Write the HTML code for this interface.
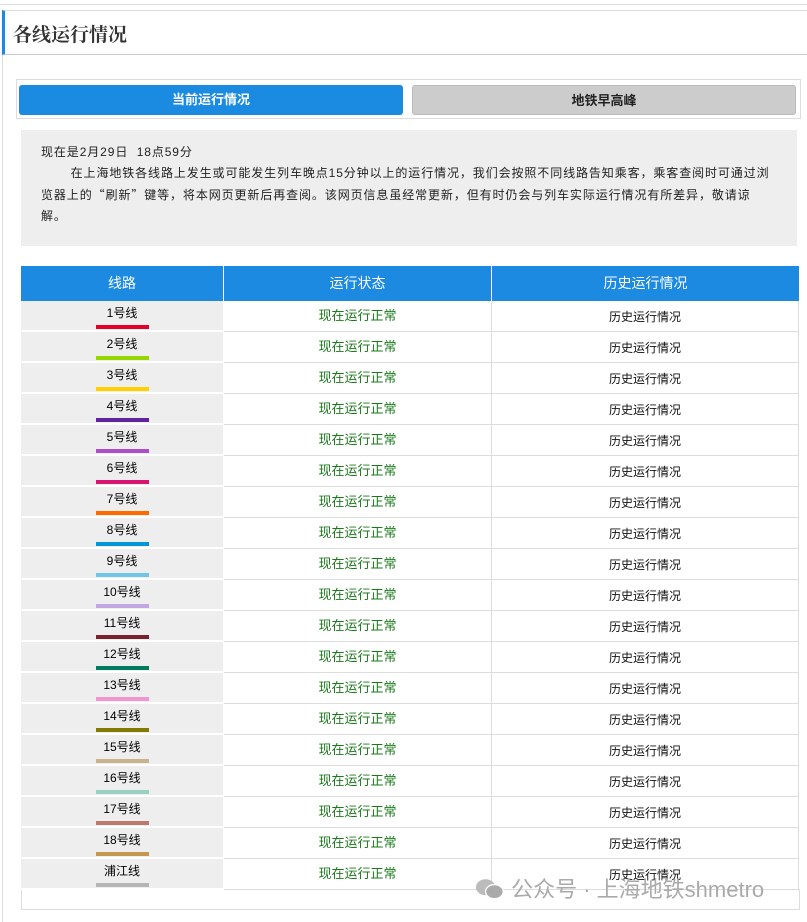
<!DOCTYPE html>
<html><head><meta charset="utf-8"><style>
body{margin:0;width:807px;height:922px;background:#fff;font-family:"Liberation Sans","Noto Sans CJK SC",sans-serif;position:relative;overflow:hidden}
.a{position:absolute}
.topline{left:0;top:4px;width:807px;height:1px;background:#ddd}
.hdr{left:2px;top:10px;width:805px;height:45px;border-top:1px solid #ddd;border-bottom:1px solid #ccc;border-left:3px solid #1a8be0;box-sizing:border-box}
.hdr span{position:absolute;left:8px;top:9px;font-size:19px;color:#333;font-family:"Noto Serif CJK SC",serif;font-weight:bold}
.vline{left:2px;top:55px;width:1px;height:867px;background:#ddd}
.tabs{left:16px;top:79px;width:785px;height:40px;border:1px solid #ddd;box-sizing:border-box}
.btn{top:85px;height:30px;border-radius:3px;font-size:13px;font-weight:bold;text-align:center;line-height:30px}
.info{left:21px;top:130px;width:776px;height:116px;background:#eee;font-size:12px;color:#222;line-height:21px;letter-spacing:0.9px;white-space:nowrap}
.q{font-family:"Noto Sans CJK SC",sans-serif}
.tbl{left:21px;top:266px;width:778px}
.th{display:flex;height:35px;background:#1b8ae0;color:#fff;font-size:14px;line-height:35px;text-align:center}
.row{display:flex;height:31px;font-size:12px;text-align:center}
.c1{width:203px;flex:none;box-sizing:border-box}
.c2{width:268px;flex:none;box-sizing:border-box}
.c3{flex:1;box-sizing:border-box}
.th .c1,.th .c2{border-right:1px solid #fff}
.row .c1{background:#eee;border-bottom:2px solid #fff;border-right:1px solid #fff;line-height:14px;padding-top:5px}
.row .c1 i{display:block;width:53px;height:4px;margin:5px auto 0}
.row .c2{border-bottom:1px solid #ddd;border-right:1px solid #ddd;color:#1a7a1a;font-size:13px;line-height:30px}
.row .c3{border-bottom:1px solid #ddd;border-right:1px solid #ddd;color:#111;line-height:32px}
</style></head><body>
<div class="a topline"></div>
<div class="a hdr"><span>各线运行情况</span></div>
<div class="a vline"></div>
<div class="a tabs"></div>
<div class="a btn" style="left:19px;width:384px;background:#1a8be0;color:#fff">当前运行情况</div>
<div class="a btn" style="left:412px;width:384px;background:#ccc;color:#222;border:1px solid #bbb;box-sizing:border-box">地铁早高峰</div>
<div class="a info"><div style="padding:12px 18px 0 20px">现在是2月29日&nbsp; 18点59分<br>&nbsp;&nbsp;&nbsp;&nbsp;&nbsp;&nbsp;&nbsp;在上海地铁各线路上发生或可能发生列车晚点15分钟以上的运行情况，我们会按照不同线路告知乘客，乘客查阅时可通过浏<br>览器上的<span class="q">“</span>刷新<span class="q">”</span>键等，将本网页更新后再查阅。该网页信息虽经常更新，但有时仍会与列车实际运行情况有所差异，敬请谅<br>解。</div></div>
<div class="a" style="left:21px;top:889px;width:777px;height:20px;border:1px solid #ddd;border-top:none"></div>
<div class="a tbl">
<div class="th"><div class="c1">线路</div><div class="c2">运行状态</div><div class="c3">历史运行情况</div></div>
<div class="row"><div class="c1">1号线<i style="background:#e4002b"></i></div><div class="c2">现在运行正常</div><div class="c3">历史运行情况</div></div>
<div class="row"><div class="c1">2号线<i style="background:#97d700"></i></div><div class="c2">现在运行正常</div><div class="c3">历史运行情况</div></div>
<div class="row"><div class="c1">3号线<i style="background:#ffd100"></i></div><div class="c2">现在运行正常</div><div class="c3">历史运行情况</div></div>
<div class="row"><div class="c1">4号线<i style="background:#5f259f"></i></div><div class="c2">现在运行正常</div><div class="c3">历史运行情况</div></div>
<div class="row"><div class="c1">5号线<i style="background:#ac4fc6"></i></div><div class="c2">现在运行正常</div><div class="c3">历史运行情况</div></div>
<div class="row"><div class="c1">6号线<i style="background:#d71671"></i></div><div class="c2">现在运行正常</div><div class="c3">历史运行情况</div></div>
<div class="row"><div class="c1">7号线<i style="background:#ff6900"></i></div><div class="c2">现在运行正常</div><div class="c3">历史运行情况</div></div>
<div class="row"><div class="c1">8号线<i style="background:#0094d8"></i></div><div class="c2">现在运行正常</div><div class="c3">历史运行情况</div></div>
<div class="row"><div class="c1">9号线<i style="background:#71c5e8"></i></div><div class="c2">现在运行正常</div><div class="c3">历史运行情况</div></div>
<div class="row"><div class="c1">10号线<i style="background:#c1a7e2"></i></div><div class="c2">现在运行正常</div><div class="c3">历史运行情况</div></div>
<div class="row"><div class="c1">11号线<i style="background:#76232f"></i></div><div class="c2">现在运行正常</div><div class="c3">历史运行情况</div></div>
<div class="row"><div class="c1">12号线<i style="background:#007b5f"></i></div><div class="c2">现在运行正常</div><div class="c3">历史运行情况</div></div>
<div class="row"><div class="c1">13号线<i style="background:#ef95cf"></i></div><div class="c2">现在运行正常</div><div class="c3">历史运行情况</div></div>
<div class="row"><div class="c1">14号线<i style="background:#827a04"></i></div><div class="c2">现在运行正常</div><div class="c3">历史运行情况</div></div>
<div class="row"><div class="c1">15号线<i style="background:#c8b38e"></i></div><div class="c2">现在运行正常</div><div class="c3">历史运行情况</div></div>
<div class="row"><div class="c1">16号线<i style="background:#98d1c0"></i></div><div class="c2">现在运行正常</div><div class="c3">历史运行情况</div></div>
<div class="row"><div class="c1">17号线<i style="background:#bc7970"></i></div><div class="c2">现在运行正常</div><div class="c3">历史运行情况</div></div>
<div class="row"><div class="c1">18号线<i style="background:#c4984f"></i></div><div class="c2">现在运行正常</div><div class="c3">历史运行情况</div></div>
<div class="row"><div class="c1">浦江线<i style="background:#b5b5b5"></i></div><div class="c2">现在运行正常</div><div class="c3">历史运行情况</div></div>
</div>
<div class="a" style="left:475px;top:876px;font-size:22px;color:#aaa;white-space:nowrap;line-height:26px">
<svg width="30" height="26" viewBox="0 0 34 26" style="vertical-align:-5px"><ellipse cx="12" cy="11" rx="11" ry="9" fill="#bbb"/><ellipse cx="22" cy="16" rx="10" ry="8" fill="#aaa" stroke="#fff" stroke-width="1.5"/></svg> 公众号 · 上海地铁shmetro</div>
</body></html>
